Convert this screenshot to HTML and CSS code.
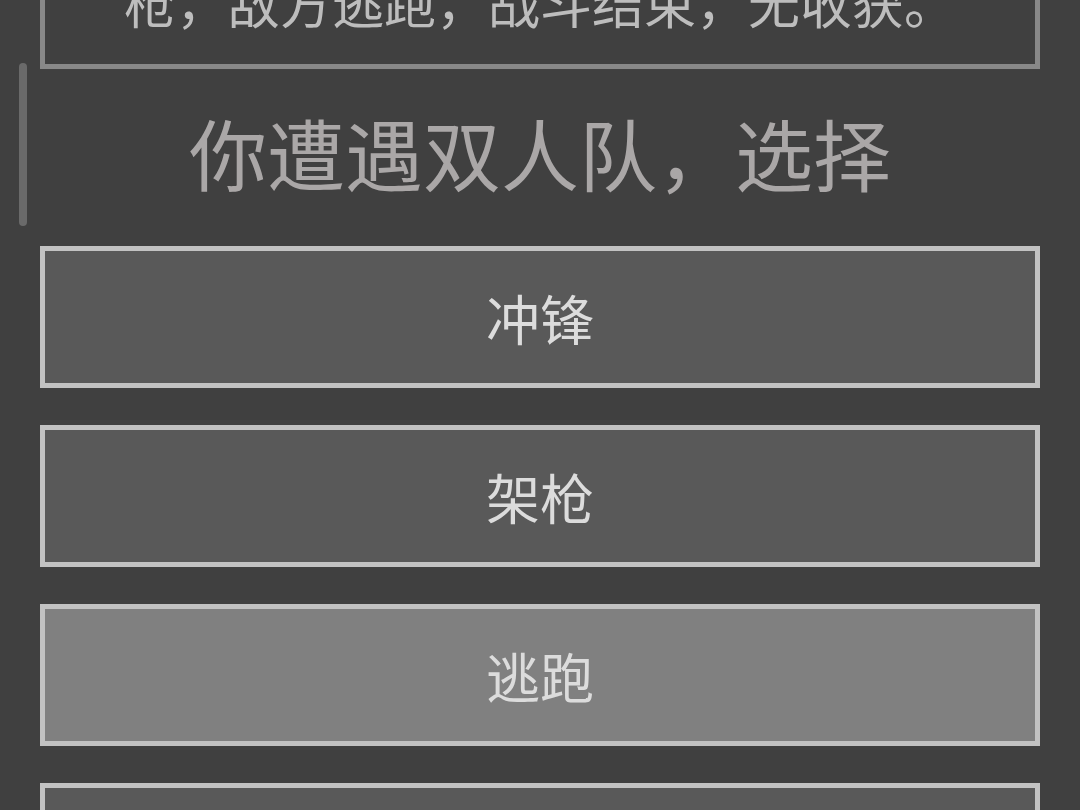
FILE: index.html
```html
<!DOCTYPE html>
<html lang="zh-CN">
<head>
<meta charset="utf-8">
<title>遭遇</title>
<link rel="stylesheet" href="styles.css">
</head>
<body>
<div class="scrollbar"></div>
<main class="page">
  <div class="story">
    <p class="story-text">枪，敌方逃跑，战斗结束，无收获。</p>
  </div>
  <h2 class="prompt">你遭遇双人队，选择</h2>
  <div class="choices">
    <button class="choice">冲锋</button>
    <button class="choice">架枪</button>
    <button class="choice active">逃跑</button>
    <button class="choice">躲藏</button>
  </div>
</main>
</body>
</html>
```
FILE: styles.css
```css
html, body {
  margin: 0;
  padding: 0;
  background: #404040;
  height: 100%;
  overflow: hidden;
}
body {
  font-family: "Noto Sans CJK SC", "Noto Sans", sans-serif;
}
.scrollbar {
  position: absolute;
  left: 19px;
  top: 63px;
  width: 8px;
  height: 163px;
  border-radius: 4px;
  background: #6a6a6a;
}
.page {
  padding: 0 40px;
  margin-top: -37px;
}
.story {
  border: 5px solid #888888;
  padding: 0 0 28px;
}
.story-text {
  margin: 0;
  font-size: 52px;
  line-height: 68px;
  color: #bdbdbd;
  text-align: center;
}
.prompt {
  margin: 0;
  padding: 36px 0 46px;
  font-size: 78px;
  font-weight: 400;
  line-height: 95px;
  color: #aaa7a7;
  text-align: center;
}
.choices {
  display: flex;
  flex-direction: column;
  gap: 37px;
}
.choice {
  box-sizing: border-box;
  height: 142px;
  width: 100%;
  border: 5px solid #c2c2c2;
  background: #595959;
  color: #dcdcdc;
  font-family: inherit;
  font-size: 54px;
  padding: 0;
}
.choice.active {
  background: #808080;
}
```
